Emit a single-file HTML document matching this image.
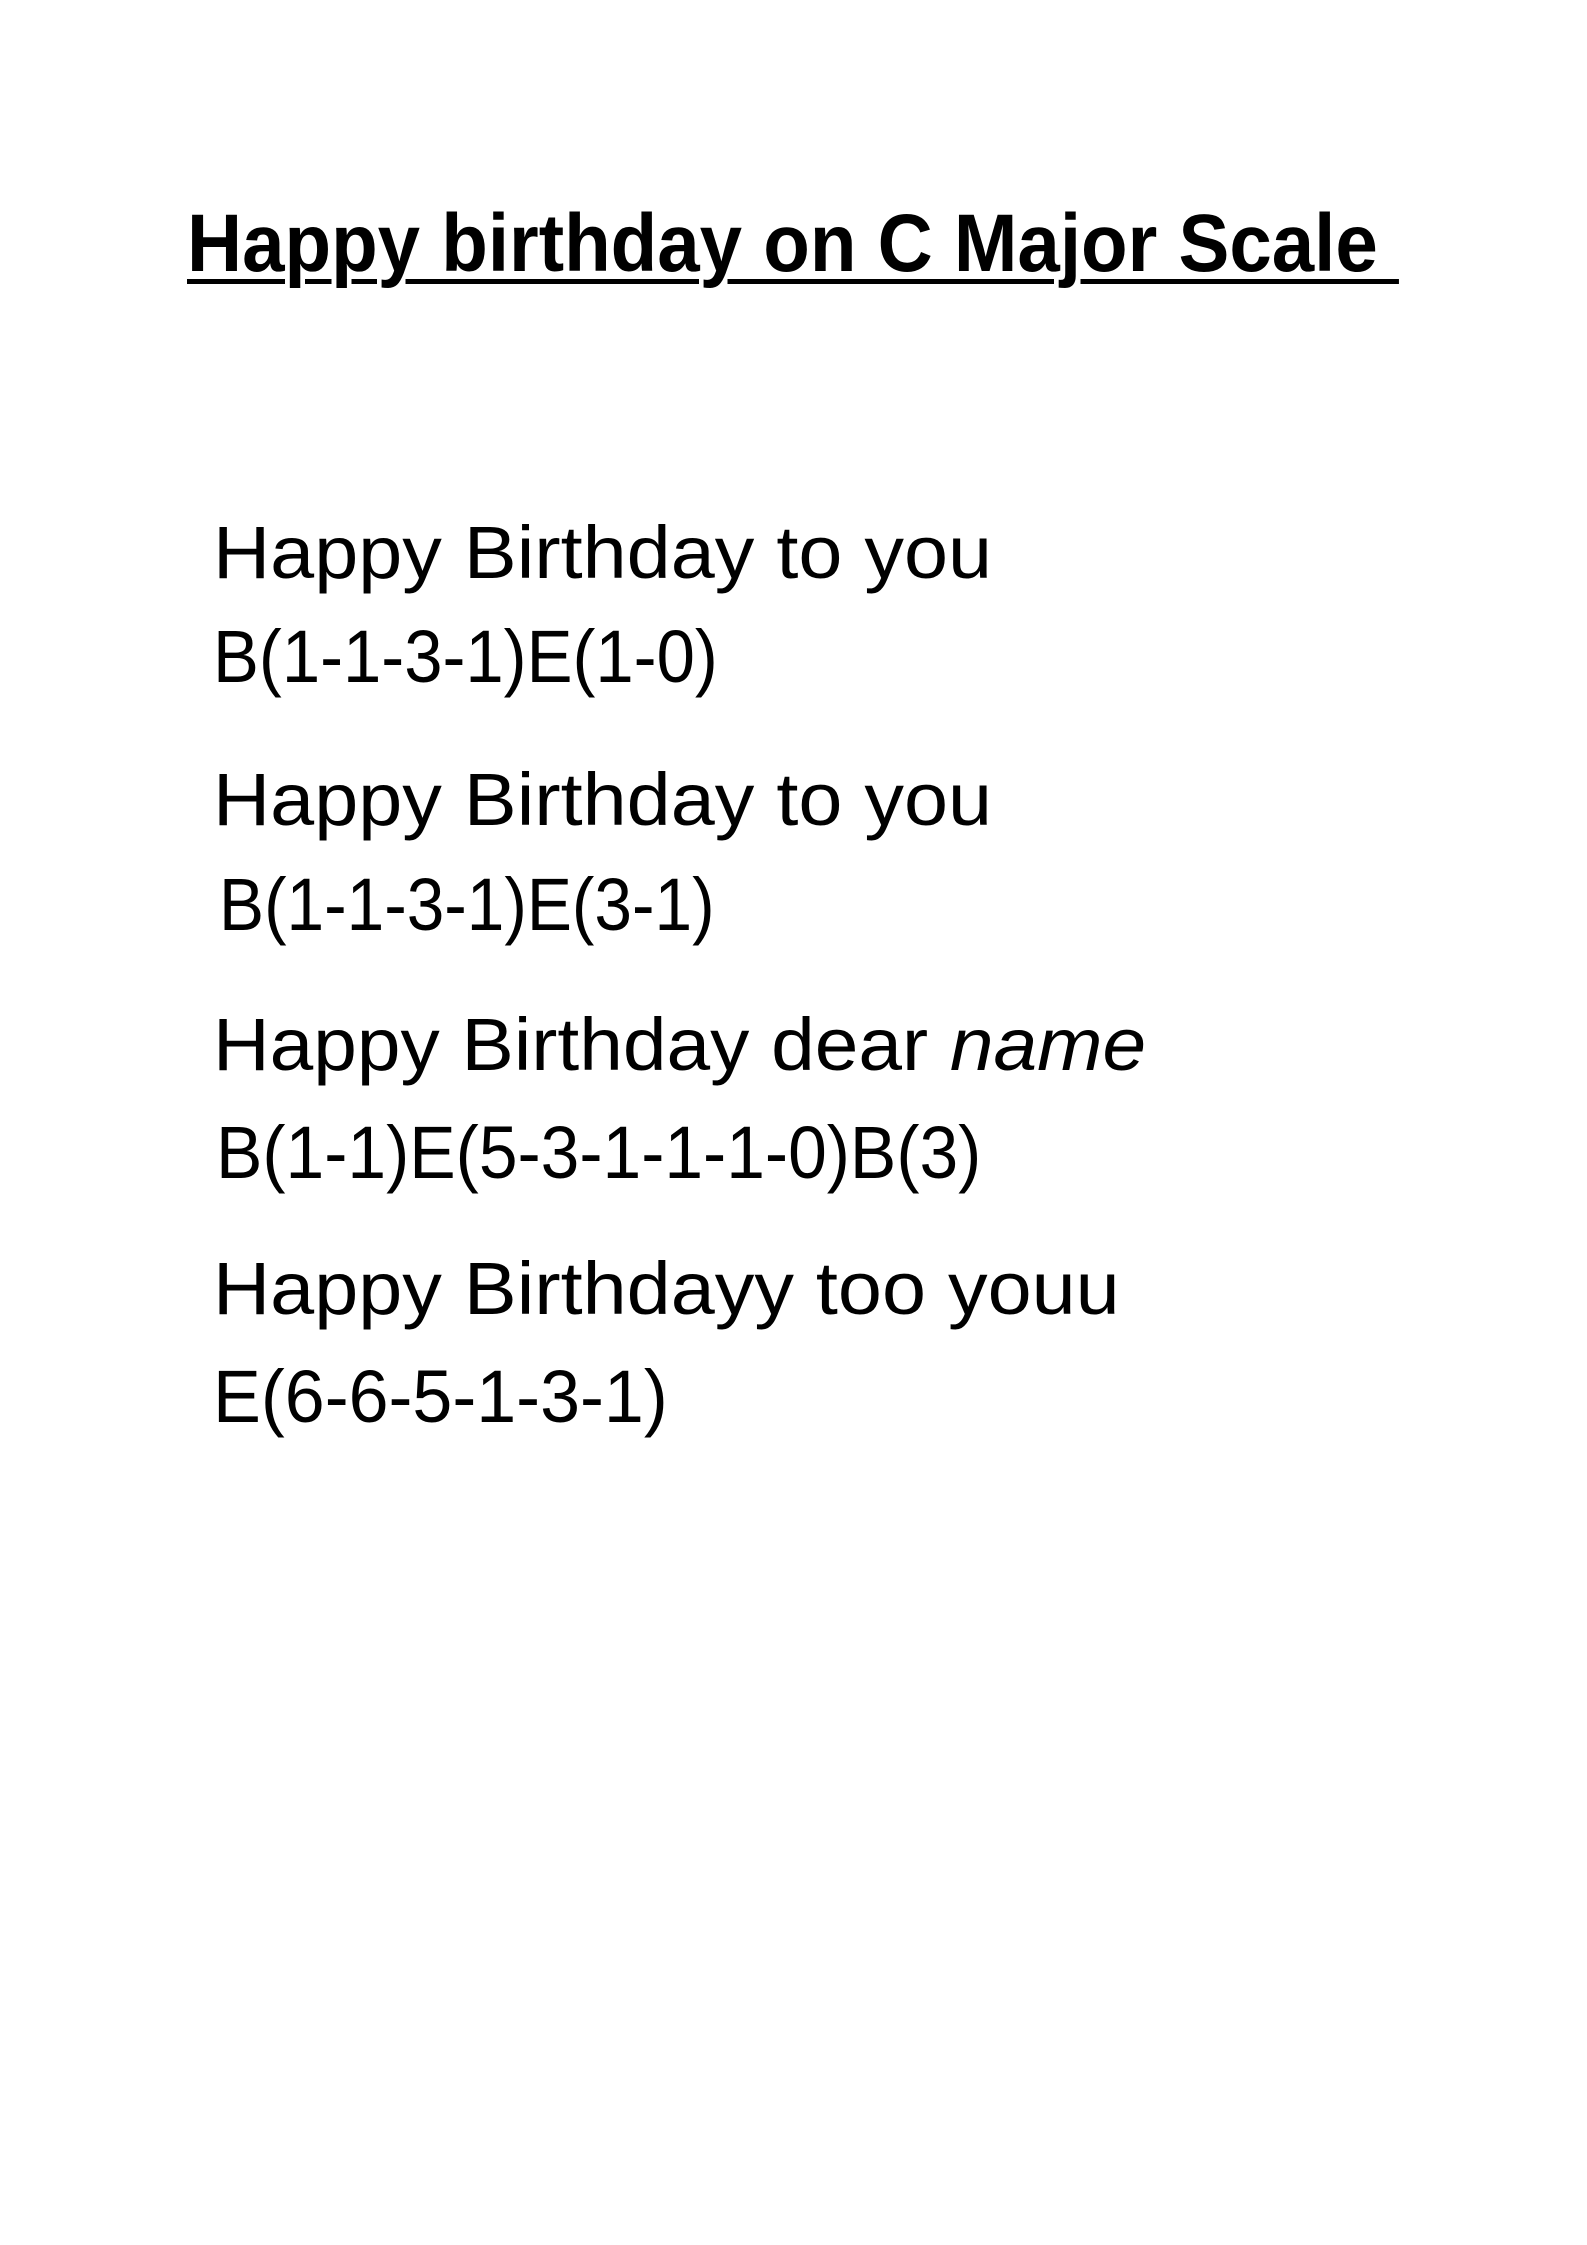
<!DOCTYPE html>
<html><head><meta charset="utf-8"><style>
html,body{margin:0;padding:0;background:#fff;}
body{width:1587px;height:2245px;position:relative;overflow:hidden;font-family:"Liberation Sans",sans-serif;color:#000;}
.t{position:absolute;line-height:1;white-space:pre;font-size:74px;transform-origin:0 0;}
.h{position:absolute;left:187px;top:203px;font-size:82px;font-weight:bold;line-height:1;white-space:pre;text-decoration:underline;text-decoration-thickness:5px;text-underline-offset:8px;transform:scaleX(0.93);transform-origin:0 0;}
</style></head><body>
<div class="h">Happy birthday on C Major Scale </div>
<div class="t" style="left:213px;top:516px;transform:scaleX(1.07)">Happy Birthday to you</div>
<div class="t" style="left:213px;top:620px;transform:scaleX(0.93)">B(1-1-3-1)E(1-0)</div>
<div class="t" style="left:213px;top:763px;transform:scaleX(1.07)">Happy Birthday to you</div>
<div class="t" style="left:219px;top:868px;transform:scaleX(0.913)">B(1-1-3-1)E(3-1)</div>
<div class="t" style="left:213px;top:1008px;transform:scaleX(1.06)">Happy Birthday dear <i>name</i></div>
<div class="t" style="left:216px;top:1116px;transform:scaleX(0.94)">B(1-1)E(5-3-1-1-1-0)B(3)</div>
<div class="t" style="left:213px;top:1252px;transform:scaleX(1.07)">Happy Birthdayy too youu</div>
<div class="t" style="left:213px;top:1360px;transform:scaleX(0.97)">E(6-6-5-1-3-1)</div>
</body></html>
